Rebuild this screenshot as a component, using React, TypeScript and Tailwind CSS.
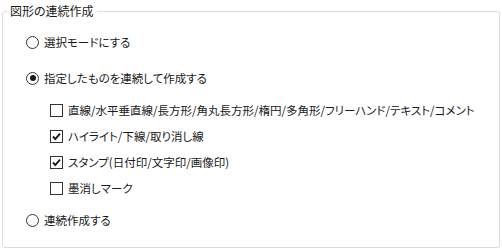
const font = '[font-family:"Noto_Sans_CJK_JP","Noto_Sans",sans-serif] [font-feature-settings:"palt"]'

function Radio({ checked, label, className }: { checked?: boolean; label: string; className?: string }) {
  return (
    <label className={`flex h-4 items-center gap-[5px] pl-[23px] ${className ?? ''}`}>
      <span className="flex h-[13px] w-[13px] items-center justify-center rounded-full border border-[#333333] bg-white">
        {checked ? <span className="h-[6px] w-[6px] rounded-full bg-[#1a1a1a]" /> : null}
      </span>
      <span>{label}</span>
    </label>
  )
}

function Check({ checked, label, className }: { checked?: boolean; label: string; className?: string }) {
  return (
    <label className={`flex h-4 items-center gap-[5px] pl-[47px] ${className ?? ''}`}>
      <span className="flex h-[13px] w-[13px] items-center justify-center border border-[#333333] bg-white">
        {checked ? (
          <svg width="11" height="11" viewBox="0 0 11 11">
            <path d="M2 5.5 L4.3 8 L9 2.6" fill="none" stroke="#1a1a1a" strokeWidth="1.9" />
          </svg>
        ) : null}
      </span>
      <span>{label}</span>
    </label>
  )
}

export default function App() {
  return (
    <div className={`h-[250px] w-[502px] bg-white pt-[3px] text-[11.5px] leading-4 text-[#1a1a1a] ${font}`}>
      <fieldset className="ml-[2px] w-[498px] rounded-[3px] border border-[#dcdcdc] pb-[19px]">
        <legend className="ml-[4px] px-[3px] text-[12px]">図形の連続作成</legend>
        <div className="flex flex-col pt-[15px]">
          <Radio label="選択モードにする" />
          <Radio checked label="指定したものを連続して作成する" className="mt-5" />
          <Check label="直線/水平垂直線/長方形/角丸長方形/楕円/多角形/フリーハンド/テキスト/コメント" className="mt-[16px]" />
          <Check checked label="ハイライト/下線/取り消し線" className="mt-[10px]" />
          <Check checked label="スタンプ(日付印/文字印/画像印)" className="mt-[10px]" />
          <Check label="墨消しマーク" className="mt-[10px]" />
          <Radio label="連続作成する" className="mt-4" />
        </div>
      </fieldset>
    </div>
  )
}
